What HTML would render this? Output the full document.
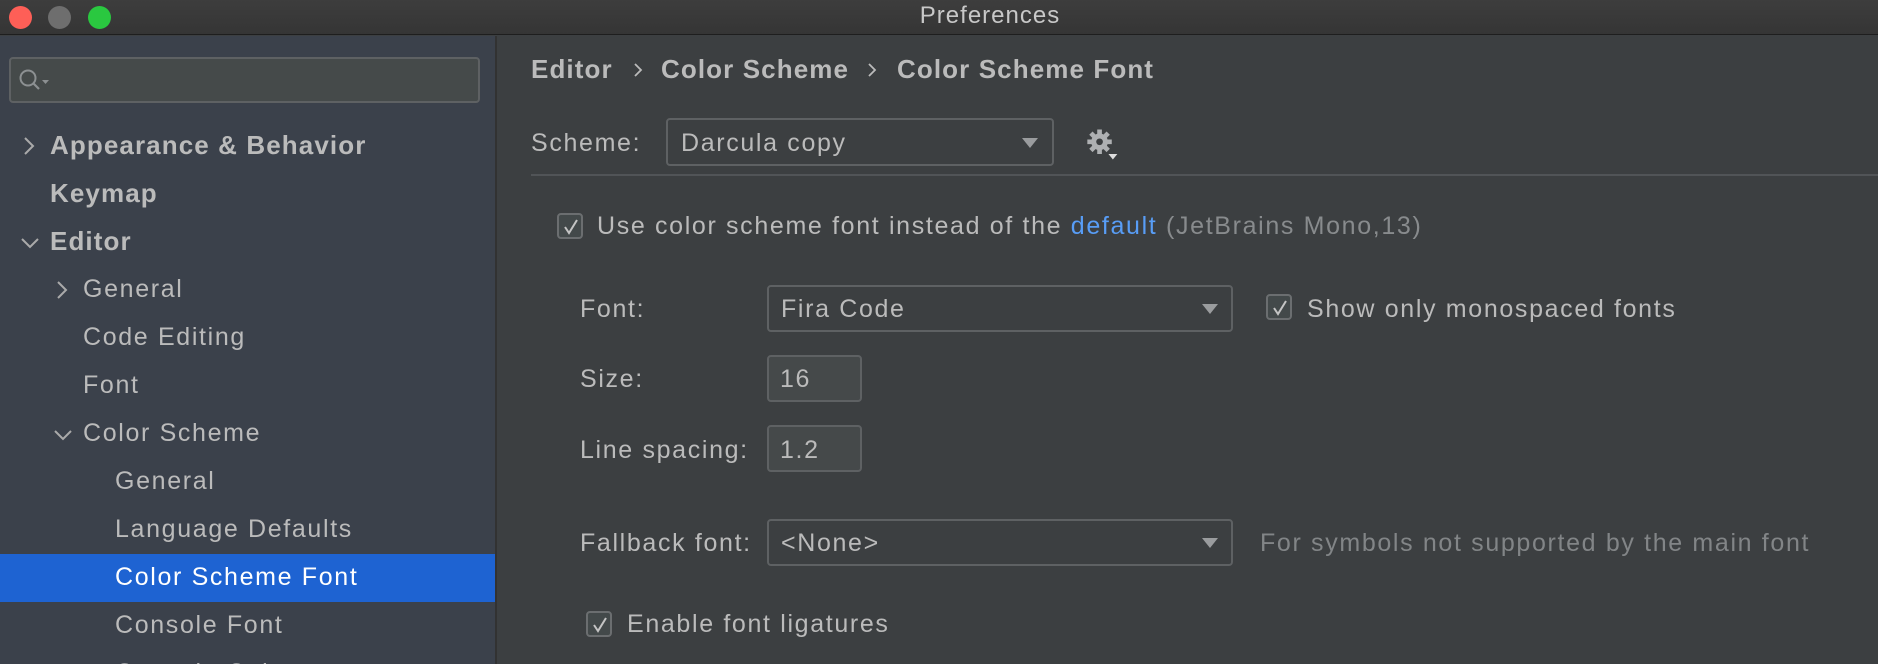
<!DOCTYPE html>
<html style="overflow:hidden;width:1878px;height:664px"><head><meta charset="utf-8"><style>
*{margin:0;padding:0;box-sizing:border-box}
body{width:1878px;height:664px;overflow:hidden;background:#3c3f41;font-family:"Liberation Sans",sans-serif;color:#bbbbbb;position:relative}
.a{position:absolute;white-space:nowrap}
.t{font-size:25px;letter-spacing:1.65px;line-height:30px}
.b{font-weight:bold;font-size:26px;letter-spacing:1.1px;line-height:30px}
#title{left:0;top:0;width:1878px;height:35px;background:linear-gradient(#3d3d3d,#353535);border-bottom:1px solid #1e1e1e}
.dot{position:absolute;top:6px;width:23px;height:23px;border-radius:50%}
#side{left:0;top:36px;width:497px;height:628px;background:#3b414b;border-right:2px solid #323232;overflow:hidden}
.box{position:absolute;border:2px solid #5e6163;border-radius:4px}
.cb{position:absolute;width:26px;height:26px;border:2px solid #6b6e70;border-radius:4px;background:#43494a}
.cb svg{position:absolute;left:3px;top:3px}
.tri{position:absolute;width:0;height:0;border-left:8px solid transparent;border-right:8px solid transparent;border-top:10px solid #9a9c9e}
</style></head><body>
<div class="a" id="title"></div>
<div class="dot" style="left:9px;background:#fe5f57"></div>
<div class="dot" style="left:48px;background:#6e6e6e"></div>
<div class="dot" style="left:88px;background:#2ac840"></div>
<div class="a" style="left:0;top:2px;width:1980px;text-align:center;font-size:24px;color:#c8c8c8;letter-spacing:1px">Preferences</div>

<div class="a" id="side">
<svg class="a" style="left:22px;top:100px" width="14" height="20"><path d="M3 2l8 8-8 8" fill="none" stroke="#aaa" stroke-width="2"/></svg>
<div class="a b" style="left:50px;top:94px">Appearance &amp; Behavior</div>
<div class="a b" style="left:50px;top:142px">Keymap</div>
<svg class="a" style="left:20px;top:200px" width="20" height="14"><path d="M2 3l8 8 8-8" fill="none" stroke="#aaa" stroke-width="2"/></svg>
<div class="a b" style="left:50px;top:190px">Editor</div>
<svg class="a" style="left:55px;top:244px" width="14" height="20"><path d="M3 2l8 8-8 8" fill="none" stroke="#aaa" stroke-width="2"/></svg>
<div class="a t" style="left:83px;top:238px">General</div>
<div class="a t" style="left:83px;top:286px">Code Editing</div>
<div class="a t" style="left:83px;top:334px">Font</div>
<svg class="a" style="left:53px;top:392px" width="20" height="14"><path d="M2 3l8 8 8-8" fill="none" stroke="#aaa" stroke-width="2"/></svg>
<div class="a t" style="left:83px;top:382px">Color Scheme</div>
<div class="a t" style="left:115px;top:430px">General</div>
<div class="a t" style="left:115px;top:478px">Language Defaults</div>
<div class="a" style="left:0;top:518px;width:496px;height:48px;background:#1e63d2"></div>
<div class="a t" style="left:115px;top:526px;color:#fff">Color Scheme Font</div>
<div class="a t" style="left:115px;top:574px">Console Font</div>
<div class="a t" style="left:115px;top:622px">Console Colors</div>
</div>
<div class="box" style="left:9px;top:57px;width:471px;height:46px;background:#454a4a"></div>
<svg class="a" style="left:18px;top:68px" width="40" height="26" viewBox="0 0 40 26"><circle cx="10" cy="10" r="7.5" fill="none" stroke="#8c9092" stroke-width="2"/><path d="M15 15l6 6" stroke="#8c9092" stroke-width="2.2"/><path d="M24 12h7l-3.5 4z" fill="#8c9092"/></svg>

<div class="a b" style="left:531px;top:54px">Editor</div>
<svg class="a" style="left:632px;top:62px" width="12" height="16"><path d="M3 2l6 6-6 6" fill="none" stroke="#bbb" stroke-width="1.8"/></svg>
<div class="a b" style="left:661px;top:54px">Color Scheme</div>
<svg class="a" style="left:866px;top:62px" width="12" height="16"><path d="M3 2l6 6-6 6" fill="none" stroke="#bbb" stroke-width="1.8"/></svg>
<div class="a b" style="left:897px;top:54px">Color Scheme Font</div>

<div class="a t" style="left:531px;top:128px">Scheme:</div>
<div class="box" style="left:666px;top:118px;width:388px;height:48px"></div>
<div class="a t" style="left:681px;top:128px">Darcula copy</div>
<div class="tri" style="left:1022px;top:138px"></div>
<svg class="a" style="left:1084px;top:126px" width="40" height="36" viewBox="0 0 36 32"><g fill="#aeb0b2"><circle cx="14" cy="14" r="7.5"/><g stroke="#aeb0b2" stroke-width="4.2"><path d="M14 3v22M3 14h22M6.2 6.2l15.6 15.6M21.8 6.2L6.2 21.8"/></g></g><circle cx="14" cy="14" r="3" fill="#3c3f41"/><path d="M22 25h8l-4 5z" fill="#ddd"/></svg>
<div class="a" style="left:531px;top:174px;width:1347px;height:2px;background:#515457"></div>

<div class="cb" style="left:557px;top:213px"><svg width="18" height="18"><path d="M3 9l4 6 8-13" fill="none" stroke="#c4c4c4" stroke-width="2"/></svg></div>
<div class="a t" style="left:597px;top:211px">Use color scheme font instead of the <span style="color:#589df6">default</span> <span style="color:#888b8d">(JetBrains Mono,13)</span></div>

<div class="a t" style="left:580px;top:294px">Font:</div>
<div class="box" style="left:767px;top:285px;width:466px;height:47px"></div>
<div class="a t" style="left:781px;top:294px">Fira Code</div>
<div class="tri" style="left:1202px;top:304px"></div>
<div class="cb" style="left:1266px;top:294px"><svg width="18" height="18"><path d="M3 9l4 6 8-13" fill="none" stroke="#c4c4c4" stroke-width="2"/></svg></div>
<div class="a t" style="left:1307px;top:294px">Show only monospaced fonts</div>

<div class="a t" style="left:580px;top:364px">Size:</div>
<div class="box" style="left:767px;top:355px;width:95px;height:47px;background:#45494a"></div>
<div class="a t" style="left:780px;top:364px">16</div>
<div class="a t" style="left:580px;top:435px">Line spacing:</div>
<div class="box" style="left:767px;top:425px;width:95px;height:47px;background:#45494a"></div>
<div class="a t" style="left:780px;top:435px">1.2</div>

<div class="a t" style="left:580px;top:528px">Fallback font:</div>
<div class="box" style="left:767px;top:519px;width:466px;height:47px"></div>
<div class="a t" style="left:781px;top:528px">&lt;None&gt;</div>
<div class="tri" style="left:1202px;top:538px"></div>
<div class="a t" style="left:1260px;top:528px;color:#828587">For symbols not supported by the main font</div>

<div class="cb" style="left:586px;top:611px"><svg width="18" height="18"><path d="M3 9l4 6 8-13" fill="none" stroke="#c4c4c4" stroke-width="2"/></svg></div>
<div class="a t" style="left:627px;top:609px">Enable font ligatures</div>
</body></html>
